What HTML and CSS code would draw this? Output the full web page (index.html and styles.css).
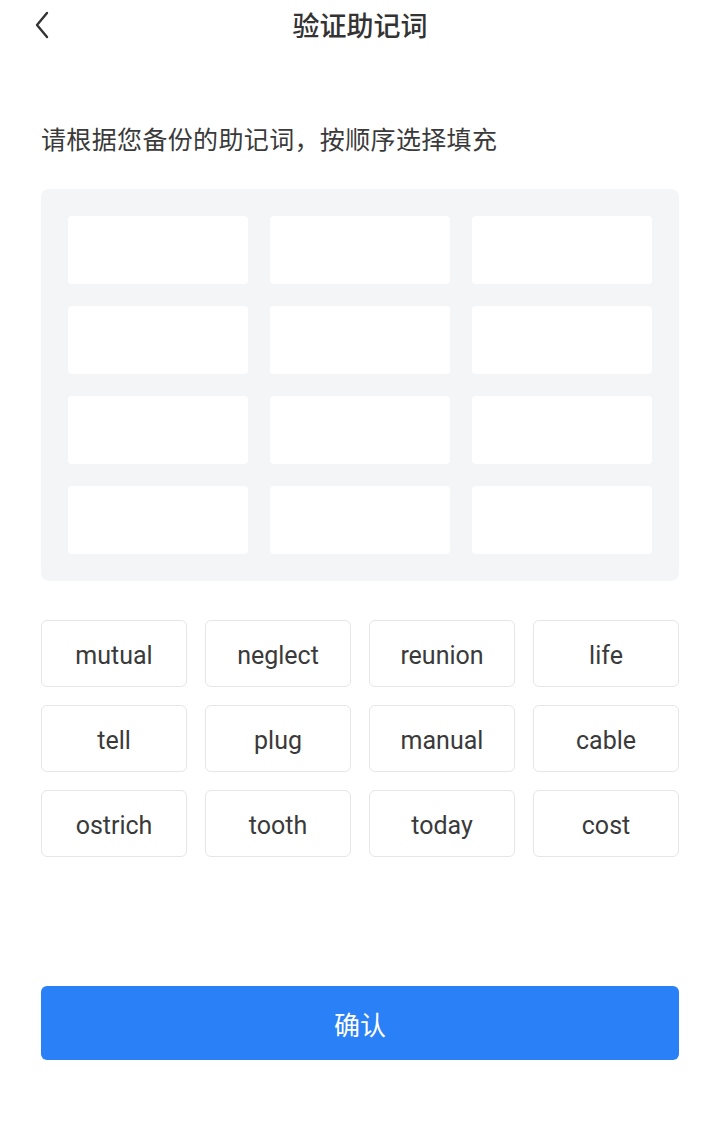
FILE: index.html
```html
<!DOCTYPE html>
<html lang="zh-CN">
<head>
<meta charset="utf-8">
<link rel="stylesheet" href="styles.css">
</head>
<body>
<div class="page">
  <header class="header">
    <div class="back">
      <svg width="16" height="28" viewBox="0 0 16 28"><path d="M13 2 L3 14 L13 26" fill="none" stroke="#333" stroke-width="2.4" stroke-linecap="round" stroke-linejoin="round"/></svg>
    </div>
    <h1 class="title">验证助记词</h1>
    <div></div>
  </header>
  <main class="content">
    <p class="hint">请根据您备份的助记词，按顺序选择填充</p>
    <div class="slots">
      <div class="slot"></div><div class="slot"></div><div class="slot"></div>
      <div class="slot"></div><div class="slot"></div><div class="slot"></div>
      <div class="slot"></div><div class="slot"></div><div class="slot"></div>
      <div class="slot"></div><div class="slot"></div><div class="slot"></div>
    </div>
    <div class="words">
      <button class="word">mutual</button>
      <button class="word">neglect</button>
      <button class="word">reunion</button>
      <button class="word">life</button>
      <button class="word">tell</button>
      <button class="word">plug</button>
      <button class="word">manual</button>
      <button class="word">cable</button>
      <button class="word">ostrich</button>
      <button class="word">tooth</button>
      <button class="word">today</button>
      <button class="word">cost</button>
    </div>
    <button class="confirm">确认</button>
  </main>
</div>
</body>
</html>
```
FILE: styles.css
```css
* { box-sizing: border-box; }
html, body { margin: 0; padding: 0; background: #fff; }
body {
  font-family: Roboto, "Noto Sans CJK SC", sans-serif;
  color: #333;
}
.page { width: 720px; }
.header {
  height: 50px;
  display: grid;
  grid-template-columns: 1fr auto 1fr;
  align-items: center;
  padding: 0 34px;
}
.back { display: flex; align-items: center; height: 28px; }
.title {
  margin: 0;
  font-family: "Noto Sans CJK SC", sans-serif;
  font-size: 27px;
  font-weight: 500;
  color: #333;
  line-height: 50px;
}
.content { padding: 0 41px; }
.hint {
  margin: 70px 0 0;
  font-family: "Noto Sans CJK SC", sans-serif;
  font-size: 25px;
  letter-spacing: 0.35px;
  line-height: 36px;
  color: #3a3a3a;
}
.slots {
  margin-top: 33px;
  background: #f4f5f7;
  border-radius: 8px;
  padding: 27px;
  display: grid;
  grid-template-columns: repeat(3, 1fr);
  column-gap: 22px;
  row-gap: 22px;
}
.slot {
  height: 68px;
  background: #fff;
  border-radius: 4px;
}
.words {
  margin-top: 39px;
  display: grid;
  grid-template-columns: repeat(4, 1fr);
  column-gap: 18px;
  row-gap: 18px;
}
.word {
  height: 67px;
  background: #fff;
  border: 1px solid #e6e6e6;
  border-radius: 6px;
  font-family: Roboto, sans-serif;
  font-size: 25px;
  color: #3a3a3a;
  padding: 3px 0 0;
}
.confirm {
  display: block;
  width: 100%;
  margin-top: 129px;
  height: 74px;
  border: none;
  border-radius: 6px;
  background: #2a80f6;
  color: #fff;
  font-family: "Noto Sans CJK SC", sans-serif;
  font-size: 26px;
}
```
